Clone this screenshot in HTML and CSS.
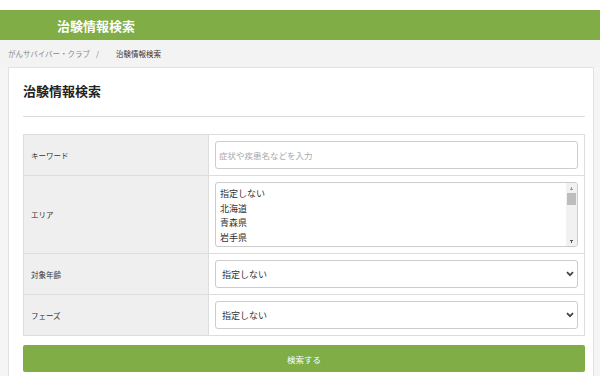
FILE: index.html
```html
<!DOCTYPE html>
<html lang="ja">
<head>
    <meta charset="UTF-8">
    <meta name="viewport" content="width=device-width, initial-scale=1.0">
    <title>治験情報検索</title>
    <link rel="stylesheet" href="styles.css">
</head>
<body>
    <div class="topbar"></div>
    <header class="site-header">
        <h1>治験情報検索</h1>
    </header>
    <nav class="breadcrumb">
        <a href="#">がんサバイバー・クラブ</a>
        <span class="sep">/</span>
        <span class="current">治験情報検索</span>
    </nav>

    <div class="card">
        <h2>治験情報検索</h2>
        <hr>
        <form id="search-form">
            <table class="search-table">
                <tr>
                    <th>キーワード</th>
                    <td><input type="text" name="keyword" placeholder="症状や疾患名などを入力"></td>
                </tr>
                <tr>
                    <th>エリア</th>
                    <td>
                        <div class="listbox" role="listbox" aria-multiselectable="true">
                            <ul class="listbox-options">
                                <li role="option">指定しない</li>
                                <li role="option">北海道</li>
                                <li role="option">青森県</li>
                                <li role="option">岩手県</li>
                                <li role="option">宮城県</li>
                            </ul>
                            <div class="scrollbar">
                                <span class="arrow up"></span>
                                <span class="thumb"></span>
                                <span class="track"></span>
                                <span class="arrow down"></span>
                            </div>
                        </div>
                    </td>
                </tr>
                <tr>
                    <th>対象年齢</th>
                    <td>
                        <div class="select-wrap">
                            <select name="age">
                                <option>指定しない</option>
                                <option>小児</option>
                                <option>成人</option>
                                <option>高齢者</option>
                            </select>
                            <svg class="chevron" width="8" height="6" viewBox="0 0 8 6"><path d="M1 1.2 L4 4.2 L7 1.2" fill="none" stroke="#444" stroke-width="1.8"/></svg>
                        </div>
                    </td>
                </tr>
                <tr>
                    <th>フェーズ</th>
                    <td>
                        <div class="select-wrap">
                            <select name="phase">
                                <option>指定しない</option>
                                <option>第I相</option>
                                <option>第II相</option>
                                <option>第III相</option>
                            </select>
                            <svg class="chevron" width="8" height="6" viewBox="0 0 8 6"><path d="M1 1.2 L4 4.2 L7 1.2" fill="none" stroke="#444" stroke-width="1.8"/></svg>
                        </div>
                    </td>
                </tr>
            </table>
            <button type="submit" class="btn">検索する</button>
        </form>
    </div>
</body>
</html>
```

FILE: styles.css
```css
body {
    margin: 0;
    font-family: "Noto Sans CJK JP", "Noto Sans", sans-serif;
    background-color: #f5f5f5;
    color: #333;
    overflow: hidden;
}

.topbar {
    height: 10px;
    background-color: white;
}

.site-header {
    height: 30px;
    background-color: #80ad46;
    display: flex;
    align-items: center;
    padding-left: 57px;
}

.site-header h1 {
    margin: 0;
    font-size: 13px;
    font-weight: bold;
    color: white;
}

.breadcrumb {
    height: 27px;
    display: flex;
    align-items: center;
    padding-left: 8px;
    font-size: 7.5px;
    background-color: #f3f3f3;
}

.breadcrumb a {
    color: #888;
    text-decoration: none;
}

.breadcrumb .sep {
    color: #888;
    margin-left: 6px;
}

.breadcrumb .current {
    color: #333;
    margin-left: 17px;
}

.card {
    margin: 0 6px 0 8px;
    background-color: white;
    border: 1px solid #e2e2e2;
    padding: 13px 8px 20px 14px;
}

.card h2 {
    margin: 0;
    font-size: 13px;
    line-height: 20px;
    font-weight: bold;
    color: #222;
}

.card hr {
    margin: 15px 0 17px;
    border: none;
    border-top: 1px solid #dcdcdc;
}

.search-table {
    width: 100%;
    border-collapse: collapse;
    border: 1px solid #dddddd;
}

.search-table th {
    width: 170px;
    background-color: #efefef;
    border: 1px solid #dddddd;
    text-align: left;
    font-weight: normal;
    font-size: 7.5px;
    padding: 0 7px;
    color: #333;
}

.search-table td {
    border: 1px solid #dddddd;
    padding: 6px;
}

.search-table input,
.search-table select {
    display: block;
    width: 100%;
    box-sizing: border-box;
    font-family: inherit;
    border: 1px solid #cccccc;
    border-radius: 3px;
    background-color: white;
    color: #333;
    outline: none;
}

.search-table input {
    height: 28px;
    padding: 0 3px;
    font-size: 8.5px;
}

.search-table input::placeholder {
    color: #aaa;
}

/* エリア: multi-select list */
.listbox {
    display: flex;
    height: 65px;
    box-sizing: border-box;
    border: 1px solid #cccccc;
    border-radius: 3px;
    overflow: hidden;
    background-color: white;
}

.listbox-options {
    flex: 1;
    margin: 0;
    padding: 4px 0 0 4px;
    list-style: none;
    font-size: 9px;
    line-height: 14.5px;
    color: #333;
    overflow: hidden;
}

.scrollbar {
    width: 11px;
    display: flex;
    flex-direction: column;
    background-color: #f1f1f1;
}

.scrollbar .arrow {
    height: 10px;
    background-repeat: no-repeat;
    background-size: 5px 3px;
    background-position: center;
}

.scrollbar .arrow.up {
    background-image: conic-gradient(from 150deg at 50% 0, #999 0 60deg, transparent 0);
}

.scrollbar .arrow.down {
    background-image: conic-gradient(from -30deg at 50% 100%, #555 0 60deg, transparent 0);
}

.scrollbar .thumb {
    height: 12px;
    margin: 0 1px;
    background-color: #bdbdbd;
}

.scrollbar .track {
    flex: 1;
}

.select-wrap {
    position: relative;
}

.select-wrap select {
    appearance: none;
    height: 28px;
    padding: 0 20px 0 6px;
    font-size: 9px;
}

.select-wrap .chevron {
    position: absolute;
    right: 4px;
    top: 11px;
    pointer-events: none;
}

.btn {
    display: block;
    width: 100%;
    height: 27px;
    margin-top: 9px;
    background-color: #80ad46;
    border: none;
    border-radius: 2px;
    color: white;
    font-family: inherit;
    font-size: 8.5px;
    cursor: pointer;
}

.btn:hover {
    background-color: #739d3e;
}
```
